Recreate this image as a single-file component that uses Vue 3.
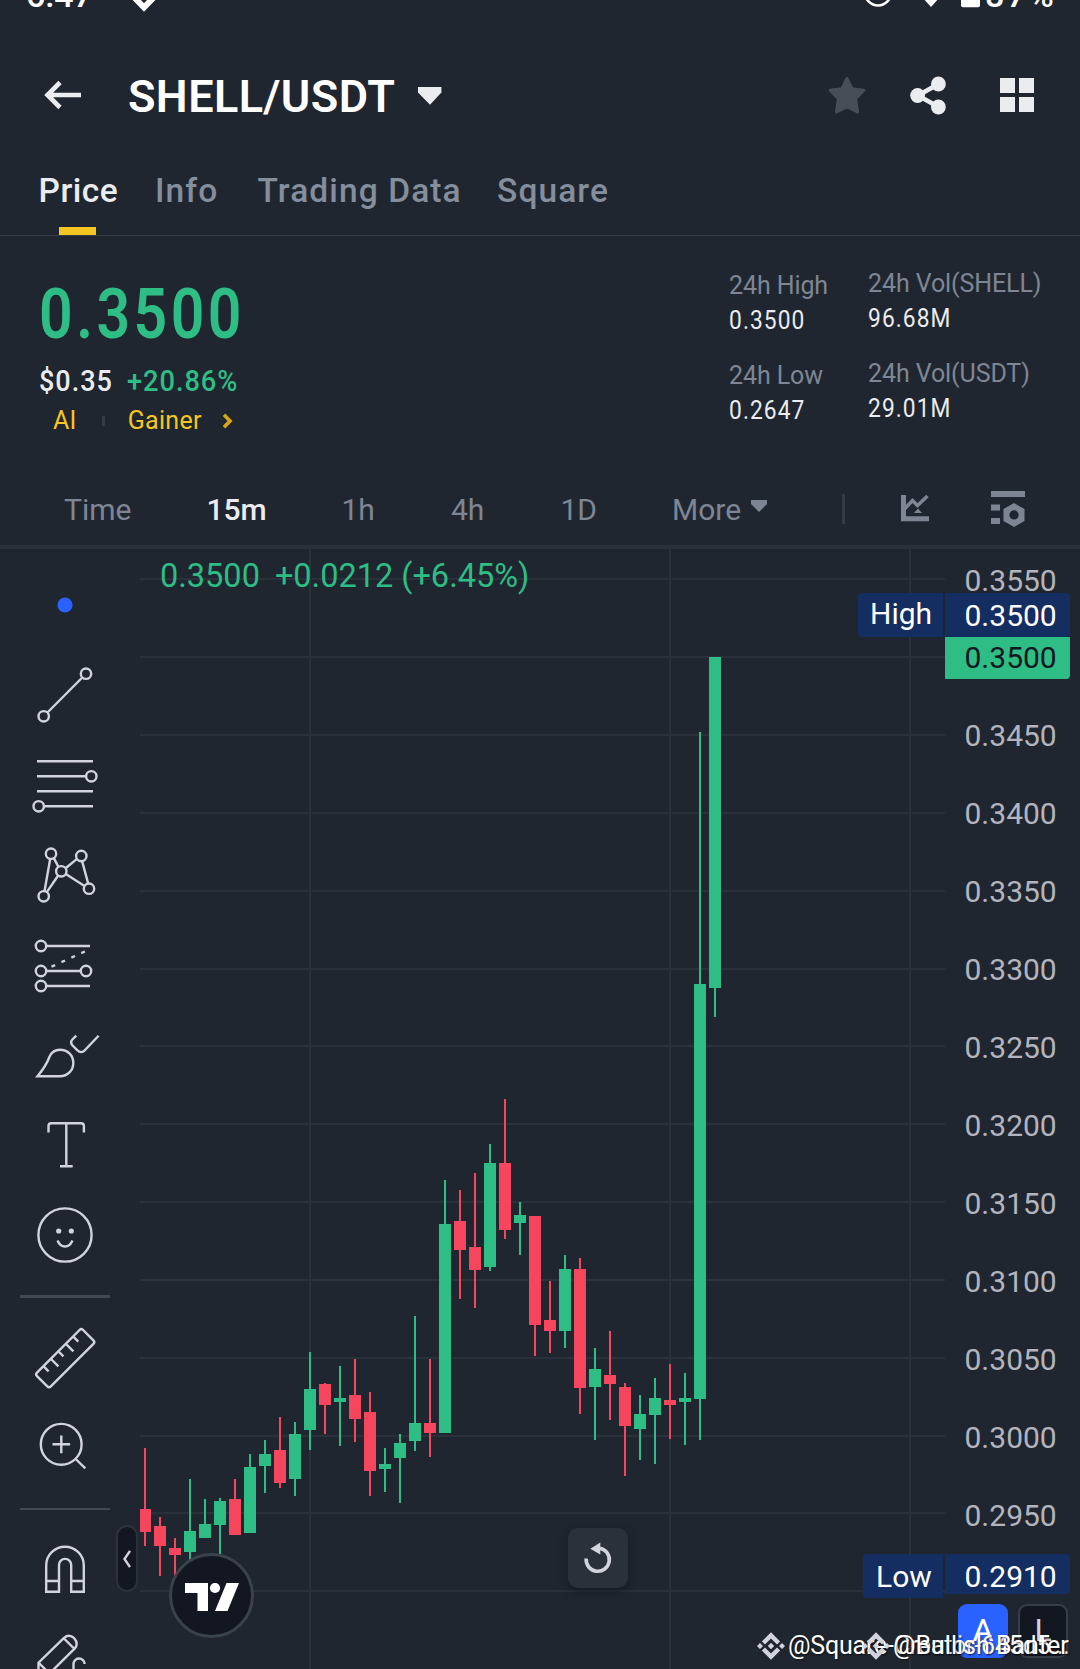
<script setup>
import { ref } from 'vue'

const tabs = [
    { name: 'Price', width: 116.5 },
    { name: 'Info', width: 102.5 },
    { name: 'Trading Data', width: 239.5 },
    { name: 'Square', width: 130 },
]
const activeTab = ref('Price')

const stats = [
    [
        { label: '24h High', value: '0.3500' },
        { label: '24h Low', value: '0.2647' },
    ],
    [
        { label: '24h Vol(SHELL)', value: '96.68M' },
        { label: '24h Vol(USDT)', value: '29.01M' },
    ],
]

const frames = [
    { name: 'Time', width: 142.5 },
    { name: '15m', width: 135 },
    { name: '1h', width: 109.5 },
    { name: '4h', width: 109.5 },
    { name: '1D', width: 111.5 },
]
const activeFrame = ref('15m')

const axisLabels = [
    '0.3550', '', '0.3450', '0.3400', '0.3350', '0.3300', '0.3250',
    '0.3200', '0.3150', '0.3100', '0.3050', '0.3000', '0.2950', '',
]

const gridRows = [579, 657, 735, 813, 891, 969, 1046, 1124, 1202, 1280, 1358, 1436, 1513, 1591]
const gridCols = [310, 670, 910]

// [up, wick top, body top, body bottom, wick bottom]
const candles = [
    [0, 1448, 1509, 1532, 1546],
    [0, 1517, 1526, 1546, 1576],
    [0, 1538, 1548, 1555, 1576],
    [1, 1479, 1531, 1552, 1562],
    [1, 1499, 1524, 1538, 1538],
    [1, 1498, 1501, 1525, 1558],
    [0, 1479, 1499, 1535, 1535],
    [1, 1454, 1467, 1533, 1533],
    [1, 1440, 1454, 1466, 1493],
    [0, 1417, 1450, 1483, 1488],
    [1, 1422, 1434, 1479, 1496],
    [1, 1352, 1389, 1430, 1450],
    [0, 1383, 1384, 1405, 1434],
    [1, 1366, 1398, 1402, 1446],
    [0, 1359, 1395, 1419, 1442],
    [0, 1392, 1412, 1471, 1496],
    [1, 1448, 1464, 1469, 1492],
    [1, 1434, 1443, 1458, 1503],
    [1, 1316, 1423, 1441, 1451],
    [0, 1359, 1423, 1433, 1457],
    [1, 1180, 1224, 1433, 1433],
    [0, 1190, 1221, 1250, 1299],
    [0, 1173, 1247, 1270, 1308],
    [1, 1144, 1163, 1267, 1271],
    [0, 1099, 1163, 1230, 1239],
    [1, 1202, 1215, 1223, 1255],
    [0, 1216, 1216, 1325, 1356],
    [0, 1281, 1320, 1331, 1353],
    [1, 1255, 1269, 1331, 1348],
    [0, 1258, 1269, 1388, 1414],
    [1, 1348, 1369, 1387, 1440],
    [0, 1331, 1375, 1384, 1420],
    [0, 1383, 1387, 1426, 1476],
    [1, 1395, 1414, 1429, 1460],
    [1, 1378, 1398, 1415, 1464],
    [0, 1364, 1400, 1405, 1439],
    [1, 1373, 1398, 1402, 1445],
    [1, 732, 984, 1399, 1440],
    [1, 657, 657, 988, 1017],
]
const candleX = (i) => 145 + i * 15
</script>

<template>
    <div class="screen">
        <div class="status">
            <span class="clock">6:47</span>
            <svg class="status-check" width="30" height="14" viewBox="0 0 30 14">
                <path d="M3 -5L15 7.5L27 -5" fill="none" stroke="#fff" stroke-width="6" />
            </svg>
            <svg class="status-icons" width="120" height="14" viewBox="0 0 120 14">
                <circle cx="18" cy="-7.5" r="13" fill="none" stroke="#fff" stroke-width="2.6" />
                <path d="M62 -3H80L71 7Z" fill="#fff" />
                <rect x="101" y="-20" width="19" height="27.3" rx="2" fill="#fff" />
            </svg>
            <span class="battery">87%</span>
        </div>

        <header class="header">
            <svg class="back" width="38" height="30" viewBox="0 0 38 30">
                <path d="M37 15H4M16 2.5L3.5 15L16 27.5" fill="none" stroke="#eaecef" stroke-width="4.6" />
            </svg>
            <h1 class="pair">SHELL/USDT</h1>
            <svg class="pair-caret" width="24" height="18" viewBox="0 0 24 18">
                <path d="M0 0H23.4V5.5L12 17.8L0 5.5Z" fill="#eaecef" />
            </svg>
            <div class="actions">
                <svg width="38" height="39" viewBox="0 0 38 39">
                    <path d="M19 2.5L24 12.7L35.8 14.3L27.6 22.7L29.6 36L19 30.8L8.4 36L10.4 22.7L2.2 14.3L14 12.7Z"
                        fill="#484e58" stroke="#484e58" stroke-width="3" stroke-linejoin="round" />
                </svg>
                <svg width="38" height="39" viewBox="0 0 38 39">
                    <path d="M29.5 8L9 19.5L29.5 31" fill="none" stroke="#eaecef" stroke-width="4.6" />
                    <circle cx="8.6" cy="19.5" r="7.4" fill="#eaecef" />
                    <circle cx="29.4" cy="8" r="7.4" fill="#eaecef" />
                    <circle cx="29.4" cy="31" r="7.4" fill="#eaecef" />
                </svg>
                <svg width="34" height="34" viewBox="0 0 34 34">
                    <path d="M0 0H15V15H0ZM19 0H34V15H19ZM0 19H15V34H0ZM19 19H34V34H19Z" fill="#eaecef" />
                </svg>
            </div>
        </header>

        <nav class="tabs">
            <span v-for="tab in tabs" :key="tab.name" class="tab" :class="{ 'tab--active': tab.name === activeTab }"
                :style="{ width: tab.width + 'px' }" @click="activeTab = tab.name">{{ tab.name }}</span>
        </nav>

        <section class="ticker">
            <div class="quote">
                <div class="last">0.3500</div>
                <div class="fiat">
                    <span class="usd">$0.35</span>
                    <span class="change">+20.86%</span>
                </div>
                <div class="tags">
                    <span>AI</span>
                    <i class="tag-sep" />
                    <span>Gainer</span>
                    <svg width="11" height="16" viewBox="0 0 11 16">
                        <path d="M2 1.8L8 8L2 14.2" fill="none" stroke="#d9a513" stroke-width="3.6" />
                    </svg>
                </div>
            </div>
            <div v-for="(col, ci) in stats" :key="ci" class="stats">
                <div v-for="stat in col" :key="stat.label" class="stat">
                    <div class="stat-label">{{ stat.label }}</div>
                    <div class="stat-value">{{ stat.value }}</div>
                </div>
            </div>
        </section>

        <nav class="frames">
            <span v-for="frame in frames" :key="frame.name" class="frame"
                :class="{ 'frame--active': frame.name === activeFrame }" :style="{ width: frame.width + 'px' }"
                @click="activeFrame = frame.name">{{ frame.name }}</span>
            <span class="more">More</span>
            <svg class="more-caret" width="16" height="12" viewBox="0 0 16 12">
                <path d="M0 0H16V4L8 12L0 4Z" fill="#7d8592" />
            </svg>
            <i class="frames-sep" />
            <svg class="frames-chart" width="28" height="28" viewBox="0 0 28 28">
                <path d="M2.5 1V24.7H28" fill="none" stroke="#7d8592" stroke-width="5" />
                <path d="M4 14.5L11.5 6.5L16.5 11.5L26.5 2" fill="none" stroke="#7d8592" stroke-width="3.6" />
                <path d="M13 19L17 14.5L21 19Z" fill="#7d8592" />
            </svg>
            <svg class="frames-config" width="34" height="36" viewBox="0 0 34 36">
                <path d="M0 0H34V6H0ZM0 13.5H9V19.5H0ZM0 27H9V33H0Z" fill="#7d8592" />
                <path d="M23 12L33.5 18V30L23 36L12.5 30V18ZM23 19.3A4.6 4.6 0 1 0 23 28.6A4.6 4.6 0 1 0 23 19.3Z"
                    fill="#7d8592" fill-rule="evenodd" />
            </svg>
        </nav>

        <section class="chart">
            <aside class="tools">
                <svg class="tool" viewBox="0 0 90 90">
                    <circle cx="45" cy="45" r="7.6" class="dot" />
                </svg>
                <!-- trend line -->
                <svg class="tool" viewBox="0 0 90 90">
                    <path d="M27.5 62.5L62.3 27.5" />
                    <circle cx="66" cy="23.7" r="5.2" />
                    <circle cx="23.7" cy="66.3" r="5.2" />
                </svg>
                <!-- fib levels -->
                <svg class="tool" viewBox="0 0 90 90">
                    <path d="M17 21.3H73M17 36.3H66M17 51.3H73M24 66.3H73" />
                    <circle cx="71.3" cy="36.3" r="5.2" />
                    <circle cx="18.7" cy="66.3" r="5.2" />
                </svg>
                <!-- pattern -->
                <svg class="tool" viewBox="0 0 90 90">
                    <path
                        d="M33.8 28.1L38.5 36.9M45.6 38.3L57 28.9M62.1 31.1L68.2 53.6M45.8 44L64.5 56M38.2 45.5L26.8 62.1M30.2 28.8L24.5 61.2" />
                    <circle cx="31" cy="23.7" r="5.2" />
                    <circle cx="61.3" cy="26" r="5.2" />
                    <circle cx="41.3" cy="41.3" r="5.2" />
                    <circle cx="69" cy="58.7" r="5.2" />
                    <circle cx="23.7" cy="66.3" r="5.2" />
                </svg>
                <!-- projection -->
                <svg class="tool" viewBox="0 0 90 90">
                    <path d="M26 26H70M26 51H61M26 66H70" />
                    <path d="M31.5 46.7L66 31" stroke-dasharray="4 6.9" />
                    <circle cx="21" cy="26" r="5.2" />
                    <circle cx="21" cy="51" r="5.2" />
                    <circle cx="66" cy="51" r="5.2" />
                    <circle cx="21" cy="66" r="5.2" />
                </svg>
                <!-- brush -->
                <svg class="tool" viewBox="0 0 90 90">
                    <path
                        d="M17.5 66.3H40c7.5 0 13.3-5.8 13.3-13.4S47.5 39.7 40 39.7c-5 0-8.8 2.8-10.6 7.3C27 53.5 23.5 59 17.5 66.3Z" />
                    <path d="M56.3 25.7l-3.9 3.8c-1.6 1.8-1.6 4 0 5.8l5 5c2.2 2.4 5.2 2.4 7.4 0L78.6 25.7" />
                </svg>
                <!-- text -->
                <svg class="tool" viewBox="0 0 90 90">
                    <path d="M28.5 32.5v-6.5q0-2.7 2.7-2.7h30q2.7 0 2.7 2.7v6.5M46.3 23.3v43M40 66.3h12.7" />
                </svg>
                <!-- emoji -->
                <svg class="tool" viewBox="0 0 90 90">
                    <circle cx="45" cy="45" r="26.6" />
                    <circle cx="38.7" cy="41" r="2.6" class="fill" />
                    <circle cx="51.3" cy="41" r="2.6" class="fill" />
                    <path d="M37.5 50.5q2.5 6 7.5 6t7.5-6" />
                </svg>
                <i class="tools-line" />
                <!-- ruler -->
                <svg class="tool" viewBox="0 0 90 90">
                    <g transform="translate(45.2 46.2) rotate(-45)">
                        <rect x="-32.6" y="-9.8" width="65.2" height="19.6" rx="2.5" />
                        <path d="M-21 -9.8V-2.5M-10.6 -9.8V1M0 -9.8V-2.5M10.6 -9.8V1M21 -9.8V-2.5" />
                    </g>
                </svg>
                <!-- zoom in -->
                <svg class="tool" viewBox="0 0 90 90">
                    <circle cx="41.2" cy="42.3" r="20.4" />
                    <path d="M32.5 42.3h17.6M41.3 33.4v17.8M55.7 57l9.6 9.3" />
                </svg>
                <i class="tools-line tools-line--thin" />
                <!-- magnet -->
                <svg class="tool" viewBox="0 0 90 90">
                    <path
                        d="M26.2 65.8V39.5a18.8 18.8 0 0 1 37.6 0v26.3H51.2V39a6.1 6.1 0 0 0-12.2 0v26.8zM26.2 55H39M51.2 55h12.6" />
                </svg>
                <!-- drawing lock -->
                <svg class="tool" viewBox="0 0 90 90">
                    <path d="M18.5 60V46.7L44 21.8q5-4.4 10.2 .4q4.8 5.4 .4 10.4L27 60M44 22.5L54.5 33M18.5 46.7L31 59" />
                    <path d="M53.5 60V48.3a5.6 5.6 0 0 1 11.2-.3" />
                </svg>
            </aside>

            <svg class="plot" width="805" height="1120" viewBox="140 549 805 1120">
                <rect v-for="y in gridRows" :key="'r' + y" x="140" :y="y - 1" width="805" height="2" fill="#2a313b" />
                <rect v-for="x in gridCols" :key="'c' + x" :x="x - 1" y="549" width="2" height="1120" fill="#2a313b" />
                <g v-for="(c, i) in candles" :key="i" :fill="c[0] ? '#2ebd85' : '#f6465d'">
                    <rect :x="candleX(i) - 1" :y="c[1]" width="2" :height="c[4] - c[1]" />
                    <rect :x="candleX(i) - 6" :y="c[2]" width="12" :height="c[3] - c[2]" />
                </g>
            </svg>

            <div class="axis">
                <span v-for="(label, i) in axisLabels" :key="i" class="axis-label">{{ label }}</span>
            </div>

            <div class="legend"><span>0.3500</span><span>+0.0212 (+6.45%)</span></div>

            <div class="mark mark--high"><span class="mark-name">High</span><span class="mark-price">0.3500</span></div>
            <div class="mark-last">0.3500</div>
            <div class="mark mark--low"><span class="mark-name">Low</span><span class="mark-price">0.2910</span></div>

            <div class="collapse">
                <svg width="8" height="18" viewBox="0 0 8 18">
                    <path d="M7 .8L1.5 9L7 17.2" fill="none" stroke="#d1d4dc" stroke-width="2.4" />
                </svg>
            </div>

            <div class="tv">
                <svg width="56" height="28" viewBox="0 0 56 28">
                    <path d="M0 0H23V28H12.5V10H0Z" fill="#fff" />
                    <circle cx="30" cy="5" r="5.1" fill="#fff" />
                    <path d="M41.5 0H54L42.5 28H30Z" fill="#fff" />
                </svg>
            </div>

            <div class="reset">
                <svg width="32" height="32" viewBox="0 0 32 32">
                    <path d="M4.2 16.5A11.6 11.6 0 1 0 18 6.3" fill="none" stroke="#d1d4dc" stroke-width="3.6" />
                    <path d="M8.3 6.8L18.3 .6V12.6Z" fill="#d1d4dc" />
                </svg>
            </div>

            <div class="scale-modes">
                <span class="mode mode--on">A</span>
                <span class="mode">L</span>
            </div>

            <div class="credit credit--first">
                <svg class="credit-logo" viewBox="0 0 28 28">
                    <path d="M6.4 11L14 3.4L21.6 11M6.4 17L14 24.6L21.6 17" />
                    <path class="solid" d="M14 10.8L17.2 14L14 17.2L10.8 14ZM3 11L6 14L3 17L0 14ZM25 11L28 14L25 17L22 14Z" />
                </svg>
                <span>@Square-Creator-645d5...</span>
            </div>
            <div class="credit credit--second">
                <svg class="credit-logo" viewBox="0 0 28 28">
                    <path d="M6.4 11L14 3.4L21.6 11M6.4 17L14 24.6L21.6 17" />
                    <path class="solid" d="M14 10.8L17.2 14L14 17.2L10.8 14ZM3 11L6 14L3 17L0 14ZM25 11L28 14L25 17L22 14Z" />
                </svg>
                <span>@Bullish Banter</span>
            </div>
        </section>
    </div>
</template>

<style>
body {
    margin: 0;
    background: #202630;
}
</style>

<style scoped>
.screen {
    width: 1080px;
    height: 1669px;
    overflow: hidden;
    background: #202630;
    color: #eaecef;
    font-family: Roboto, 'Liberation Sans', sans-serif;
}

.screen svg {
    display: block;
    flex-shrink: 0;
}

.status {
    display: flex;
    align-items: flex-start;
    height: 40px;
    padding-left: 26px;
    color: #fff;
    font-size: 34px;
    font-weight: 500;
    line-height: 40px;
}

.clock,
.battery {
    margin-top: -25px;
}

.clock {
    width: 103px;
}

.status-icons {
    margin-left: 701px;
}

.battery {
    margin-left: 5px;
    letter-spacing: 2.5px;
}

.header {
    display: flex;
    align-items: center;
    height: 112px;
    padding: 0 46px 0 44px;
}

.back {
    position: relative;
    top: -1px;
}

.pair {
    margin: 2px 0 0 46px;
    width: 290px;
    font-size: 45px;
    font-weight: 600;
    letter-spacing: 0.4px;
    color: #fff;
    line-height: 60px;
}

.actions {
    display: flex;
    align-items: center;
    margin: -2px 0 0 auto;
}

.actions svg:nth-child(2) {
    margin: 0 53px 0 43px;
}

.tabs {
    display: flex;
    height: 83px;
    padding-left: 38.5px;
    border-bottom: 1px solid #343c48;
}

.tab {
    position: relative;
    font-size: 33.5px;
    font-weight: 500;
    line-height: 77px;
    letter-spacing: 1.1px;
    color: #848e9c;
    white-space: nowrap;
}

.tab--active {
    color: #eaecef;
    letter-spacing: 0.5px;
}

.tab--active::after {
    content: '';
    position: absolute;
    left: 20px;
    bottom: 0;
    width: 37px;
    height: 8px;
    background: #f5c622;
}

.ticker {
    display: flex;
    height: 219px;
}

.quote {
    width: 690px;
    padding: 42px 0 0 39px;
}

/* quote numbers use narrow, loosely tracked digits */
.last,
.usd,
.change,
.stat-value {
    transform-origin: left center;
}

.last {
    font-size: 71px;
    font-weight: 600;
    line-height: 71px;
    letter-spacing: 4.2px;
    transform: scaleX(0.83);
    color: #2ebd85;
}

.fiat {
    display: flex;
    margin-top: 12px;
    font-size: 30px;
    font-weight: 500;
    line-height: 40px;
    letter-spacing: 1.1px;
}

.usd {
    width: 88px;
    transform: scaleX(0.9);
}

.change {
    letter-spacing: 1px;
    transform: scaleX(0.91);
    color: #2ebd85;
}

.tags {
    display: flex;
    align-items: center;
    padding-left: 14px;
    font-size: 25px;
    line-height: 40px;
    letter-spacing: 0.3px;
    color: #f5c622;
}

.tag-sep {
    width: 3px;
    height: 10px;
    margin: 0 23px 0 25px;
    background: #343b46;
}

.tags svg {
    margin-left: 20px;
}

.stats {
    width: 139px;
    padding-top: 32px;
    font-size: 25px;
    line-height: 35px;
    letter-spacing: -0.1px;
    white-space: nowrap;
}

.stats:last-child {
    padding-top: 30px;
}

.stat {
    margin-bottom: 20px;
}

.stat-label {
    color: #7e8694;
}

.stat-value {
    letter-spacing: 1.2px;
    transform: scaleX(0.91);
}

.frames {
    display: flex;
    align-items: center;
    box-sizing: border-box;
    height: 94px;
    padding: 19px 55px 1px 64px;
    border-bottom: 4px solid #2a313b;
    font-size: 30px;
    color: #7e8694;
}

.frame--active {
    font-weight: 500;
    color: #eaecef;
}

.more {
    width: 79px;
}

.more-caret {
    margin-top: -6px;
}

.frames-sep {
    width: 3px;
    height: 30px;
    margin-left: 75px;
    background: #343c47;
}

.frames-chart {
    margin-left: auto;
    margin-top: -3px;
}

.frames-config {
    margin-left: 62px;
}

.chart {
    position: relative;
    display: flex;
    height: 1120px;
    overflow: hidden;
}

.tools {
    display: flex;
    flex-direction: column;
    width: 120px;
    padding: 11px 0 0 20px;
}

.tool {
    width: 90px;
    height: 90px;
    fill: none;
    stroke: #d1d4dc;
    stroke-width: 2.4;
}

.tool .dot {
    fill: #2962ff;
    stroke: none;
}

.tool .fill {
    fill: #d1d4dc;
    stroke: none;
}

.tools-line {
    flex-shrink: 0;
    width: 90px;
    height: 3px;
    margin: 15px 0 14px;
    background: #434953;
}

.tools-line--thin {
    height: 2px;
    margin: 16px 0;
}

.axis {
    display: flex;
    flex-direction: column;
    width: 135px;
    margin-top: -7.5px;
}

.axis-label {
    flex: 0 0 77.85px;
    padding-left: 19.5px;
    font-size: 30px;
    line-height: 78px;
    color: #b2b5be;
}

.legend {
    position: absolute;
    left: 160px;
    top: 7px;
    display: flex;
    gap: 15px;
    font-size: 32.5px;
    line-height: 40px;
    color: #2ebd85;
}

.mark {
    position: absolute;
    right: 10px;
    display: flex;
    align-items: flex-start;
    gap: 2px;
    font-size: 30px;
    color: #fff;
}

.mark--high {
    top: 44px;
}

.mark--low {
    top: 1005px;
}

.mark-name,
.mark-price {
    box-sizing: border-box;
    height: 44px;
    line-height: 45px;
    background: #142e61;
}

.mark-name {
    width: 80px;
    padding-left: 13px;
    border-radius: 4px 0 0 4px;
}

.mark--high .mark-name {
    width: 85px;
    padding-left: 12px;
    line-height: 42px;
}

.mark-price {
    width: 125px;
    padding-left: 19.5px;
    border-radius: 0 4px 4px 0;
}

.mark--low .mark-price {
    height: 40px;
}

.mark-last {
    position: absolute;
    right: 10px;
    top: 88px;
    box-sizing: border-box;
    width: 125px;
    height: 42px;
    padding-left: 19.5px;
    border-radius: 0 0 4px 0;
    background: #2ebd85;
    color: #131722;
    font-size: 30px;
    line-height: 42px;
}

.collapse {
    position: absolute;
    left: 116px;
    top: 976px;
    display: flex;
    align-items: center;
    justify-content: center;
    box-sizing: border-box;
    width: 22px;
    height: 67px;
    border: 2px solid #2c323c;
    border-radius: 11px;
    background: #131722;
}

.tv {
    position: absolute;
    left: 169px;
    top: 1004px;
    display: flex;
    align-items: center;
    justify-content: center;
    box-sizing: border-box;
    width: 85px;
    height: 85px;
    border: 3px solid #3a424c;
    border-radius: 50%;
    background: #131722;
}

.tv svg {
    margin: 2px 0 0 3px;
}

.reset {
    position: absolute;
    left: 568px;
    top: 979px;
    display: flex;
    align-items: center;
    justify-content: center;
    width: 60px;
    height: 60px;
    border-radius: 10px;
    background: #2b313b;
    box-shadow: 0 4px 8px rgba(13, 16, 24, 0.5);
}

.scale-modes {
    position: absolute;
    right: 12px;
    top: 1055px;
    display: flex;
    gap: 10px;
}

.mode {
    box-sizing: border-box;
    width: 50px;
    height: 54px;
    border: 2px solid #363e49;
    border-radius: 9px;
    background: #131722;
    color: #d1d4dc;
    font-size: 32px;
    line-height: 49px;
    text-align: center;
}

.mode--on {
    border-color: #2962ff;
    background: #2962ff;
    color: #fff;
}

.credit {
    position: absolute;
    top: 1082px;
    display: flex;
    align-items: center;
    gap: 3px;
    font-size: 25px;
    line-height: 30px;
    color: #fff;
    white-space: nowrap;
    text-shadow: 1px 1px 2px rgba(0, 0, 0, 0.6);
}

.credit--first {
    left: 757px;
    letter-spacing: -0.2px;
}

.credit--second {
    left: 862px;
}

.credit-logo {
    width: 28px;
    height: 28px;
    fill: none;
    stroke: #d1d4dc;
    stroke-width: 4.4;
}

.credit-logo .solid {
    fill: #d1d4dc;
    stroke: none;
}
</style>
